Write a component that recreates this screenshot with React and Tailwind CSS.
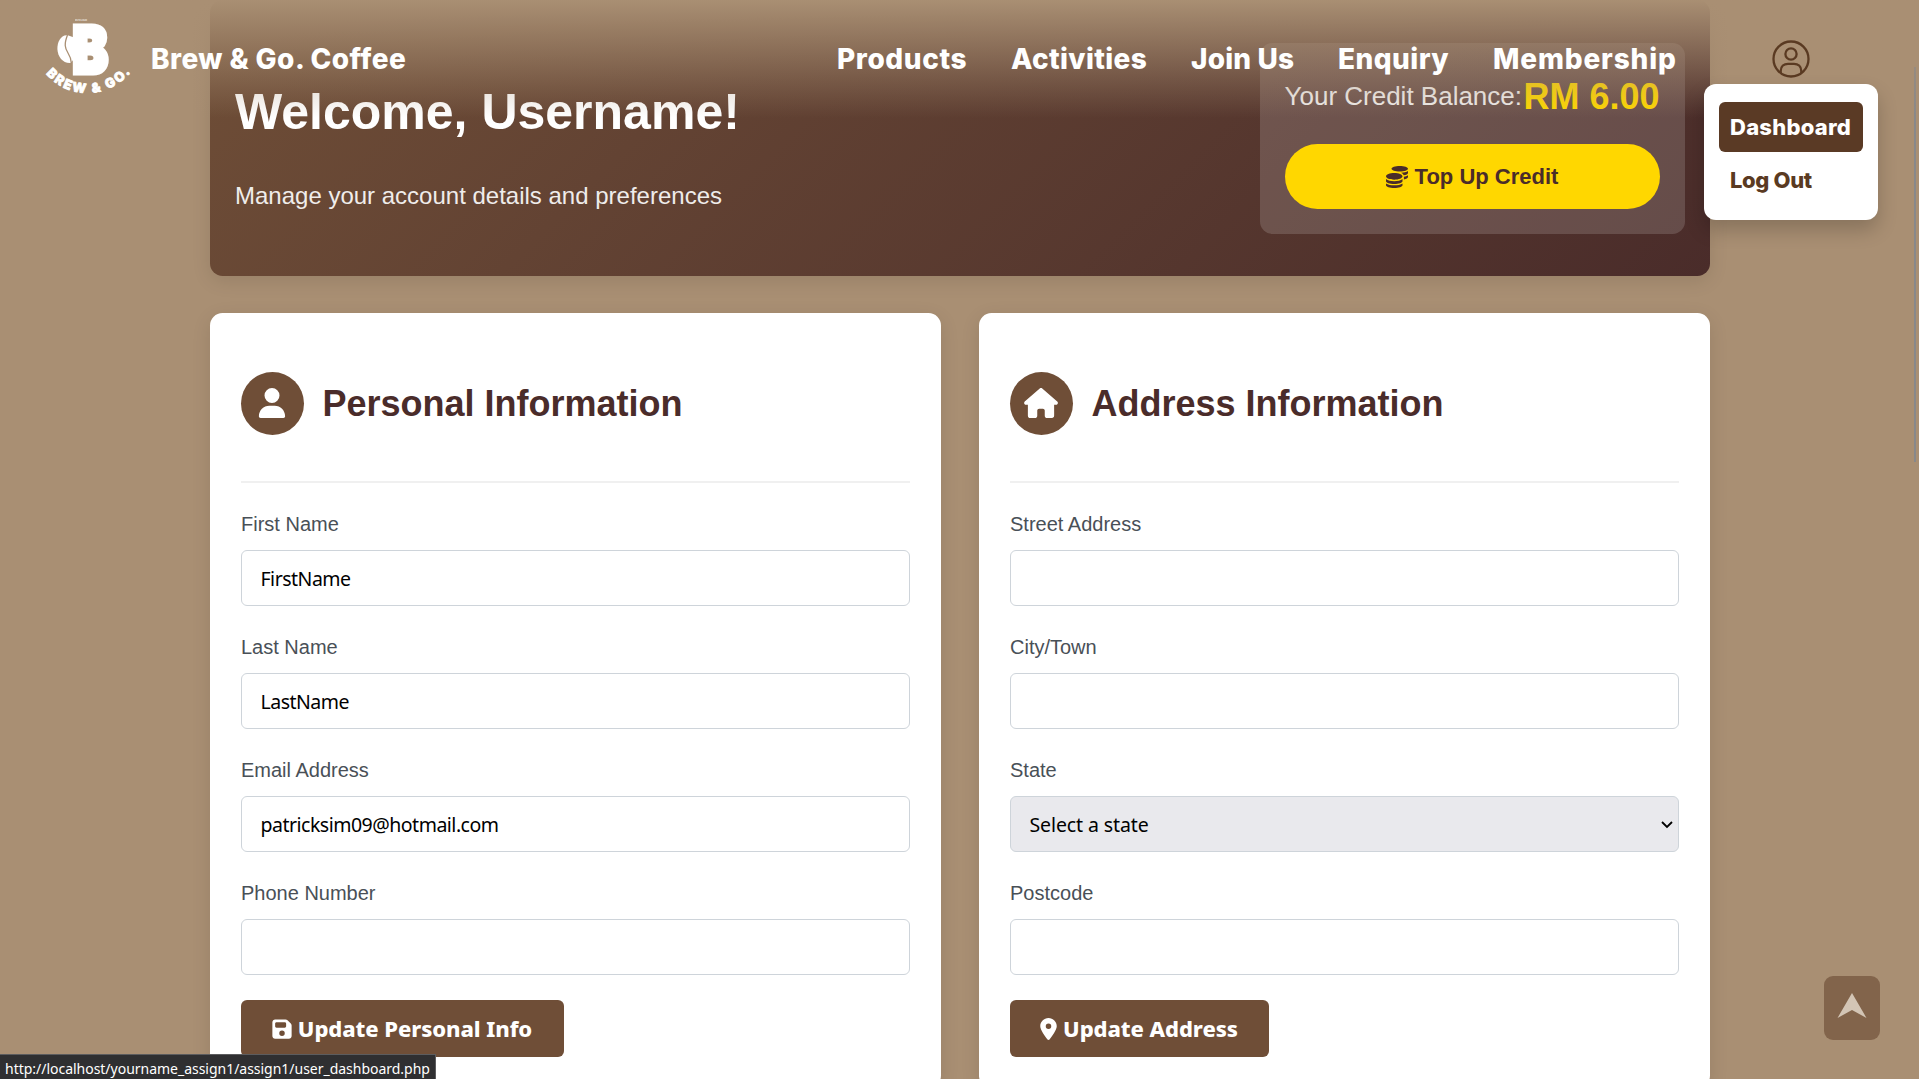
import { FaUser, FaHouse, FaFloppyDisk, FaLocationDot } from "react-icons/fa6";
import { FaCoins } from "react-icons/fa";

function Logo() {
  return (
    <svg width="90" height="80" viewBox="0 0 90 80" className="shrink-0 overflow-visible" fill="#fff">
      <text x="30" y="1.500" fontSize="2.400" fontWeight="700" opacity=".8" textLength="12" lengthAdjust="spacingAndGlyphs" fontFamily="Inter">ESTD 2020</text>
      <text x="0" y="0" transform="translate(27.6 53.9) scale(1.06 1.29)" fontSize="50" fontWeight="900" stroke="#fff" strokeWidth="4" fontFamily="Inter">B</text>
      <path d="M23.500 16.500C16 15 12.200 23 12.400 30C12.700 38 18 44.500 25.500 44L29 40V18.500Z" />
      <path d="M22.500 16C19 25 19.800 29 23 34C25.500 38 26.300 40 26.300 44" fill="none" stroke="#a98f73" strokeWidth="1.300" />
      <path id="logo-arc" d="M1 54.500C20 78.500 62 84.500 89.500 49" fill="none" />
      <text fontSize="13" fontWeight="800" stroke="#fff" strokeWidth=".9" strokeLinejoin="round" fontFamily="Inter" letterSpacing="2.100">
        <textPath href="#logo-arc">BREW &amp; GO.</textPath>
      </text>
    </svg>
  );
}

function ProfileIcon() {
  return (
    <svg width="38" height="38" viewBox="0 0 38 38" fill="none" stroke="#5a3a22" strokeWidth="2.300" className="block">
      <circle cx="19" cy="19" r="17.500" />
      <circle cx="19" cy="14" r="5.600" />
      <path d="M8.700 33V31C8.700 26.500 12 23.800 16 23.800H22C26 23.800 29.300 26.500 29.300 31V33" />
    </svg>
  );
}

function Header() {
  return (
    <header className="absolute inset-x-0 top-0 z-10 flex h-[118px] items-center bg-linear-to-b from-[#a98f73] to-[#a98f73]/0 pl-[45px] font-[Inter,sans-serif] text-[28px] leading-none font-extrabold text-white">
      <Logo />
      <span className="ml-[16px] w-[256px] tracking-[0.43px] whitespace-nowrap">Brew &amp; Go. Coffee</span>
      <nav className="ml-[430px] flex whitespace-nowrap">
        <a className="w-[174px] tracking-[0.6px]">Products</a>
        <a className="w-[180px] tracking-[0.35px]">Activities</a>
        <a className="w-[147px] tracking-[0.15px]">Join Us</a>
        <a className="w-[155px] tracking-[0.45px]">Enquiry</a>
        <a className="w-[184px] tracking-[0.85px]">Membership</a>
      </nav>
      <div className="relative ml-[95px]">
        <ProfileIcon />
        <div className="absolute top-[44px] left-[-68px] h-[136px] w-[174px] rounded-[12px] bg-white px-[15px] py-[18px] text-[22px] text-[#5a3a22] shadow-[0_10px_20px_rgba(0,0,0,0.2)]">
          <a className="flex h-[50px] items-center rounded-[6px] bg-[#5a3a25] px-[11px] tracking-[0.25px] text-white">Dashboard</a>
          <a className="mt-[3px] flex h-[50px] items-center px-[11px] tracking-[-0.35px]">Log Out</a>
        </div>
      </div>
    </header>
  );
}

function Banner() {
  return (
    <section className="flex h-[276px] shrink-0 justify-between rounded-[12.5px] bg-linear-135 from-[#6f4e37] to-[#4a2c2a] pr-[25px] pl-[25.5px] text-white shadow-[0_5px_19px_rgba(0,0,0,0.1)]">
      <div className="pt-[83px]">
        <h1 className="text-[50px] leading-[58px] font-bold">Welcome, Username!</h1>
        <p className="mt-[41px] text-[24px] leading-[28px] opacity-90">Manage your account details and preferences</p>
      </div>
      <div className="mt-[43px] h-[191px] w-[425px] rounded-[12.5px] bg-[#fff]/15 px-[25px] pt-[32px]">
        <div className="flex h-[43px] items-center justify-between whitespace-nowrap">
          <span className="text-[26px] opacity-90">Your Credit Balance:</span>
          <span className="text-[36px] font-bold text-[#ffd700]">RM 6.00</span>
        </div>
        <button className="mt-[26px] flex h-[65px] w-full items-center justify-center gap-[7px] rounded-full bg-[#ffd700] text-[22px] font-bold text-[#4a2c2a]">
          <FaCoins className="size-[22px]" />
          Top Up Credit
        </button>
      </div>
    </section>
  );
}

const control = "block h-[56px] w-full rounded-[6px] border border-[#ced4da] px-[19px] font-['Noto_Sans',sans-serif] text-[19.5px] text-black";

function Field({ label, value, select }) {
  return (
    <label className="mb-[22px] block">
      <span className="block h-[45px] pt-[7px] pl-[0.5px] text-[20px] leading-[24px] text-[#495057]">{label}</span>
      {select ? (
        <span className="relative block">
          <span className={control + " flex! items-center bg-[#e9e9ed] pt-px tracking-[-0.1px]"}>{value}</span>
          <svg width="12" height="8" viewBox="0 0 12 8" className="absolute top-[25px] right-[6px]" fill="none" stroke="#000" strokeWidth="1.800">
            <path d="M1 1L6 6L11 1" />
          </svg>
        </span>
      ) : (
        <input className={control + " bg-white tracking-[-0.5px]"} defaultValue={value} />
      )}
    </label>
  );
}

function Card({ icon, title, fields, button }) {
  return (
    <section className="h-[775px] flex-1 rounded-[12.5px] bg-white px-[31px] shadow-[0_5px_19px_rgba(0,0,0,0.1)]">
      <div className="mb-[22px] flex h-[170px] items-center gap-[19px] border-b-2 border-[#f0f0f0] pt-[12px]">
        <span className="flex size-[63px] items-center justify-center rounded-full bg-[#6f4e37] text-[30px] text-white">{icon}</span>
        <h2 className="pt-[2px] text-[36px] font-bold text-[#4a2c2a]">{title}</h2>
      </div>
      {fields.map((f) => (
        <Field key={f.label} {...f} />
      ))}
      {button}
    </section>
  );
}

const buttonClass = "mt-[25px] flex h-[57px] items-center justify-center rounded-[6px] bg-[#6f4e37] font-['Noto_Sans',sans-serif] text-[22px] font-extrabold tracking-[-0.08px] whitespace-nowrap text-white";

export default function App() {
  return (
    <div className="relative h-[1079px] w-full overflow-hidden bg-[#a98f73] font-['Liberation_Sans',Arial,sans-serif]">
      <Header />
      <main className="mx-auto flex w-[1500px] flex-col gap-[37px]">
        <Banner />
        <div className="flex gap-[38px]">
          <Card
            icon={<FaUser />}
            title="Personal Information"
            fields={[
              { label: "First Name", value: "FirstName" },
              { label: "Last Name", value: "LastName" },
              { label: "Email Address", value: "patricksim09@hotmail.com" },
              { label: "Phone Number", value: "" },
            ]}
            button={
              <button className={buttonClass + " w-[323px] gap-[6px]"}>
                <FaFloppyDisk className="h-[22px] w-[20px]" />
                Update Personal Info
              </button>
            }
          />
          <Card
            icon={<FaHouse className="h-[30px] w-[34px]" />}
            title="Address Information"
            fields={[
              { label: "Street Address", value: "" },
              { label: "City/Town", value: "" },
              { label: "State", value: "Select a state", select: true },
              { label: "Postcode", value: "" },
            ]}
            button={
              <button className={buttonClass + " w-[259px] gap-[6px]"}>
                <FaLocationDot className="h-[22px] w-[17px]" />
                Update Address
              </button>
            }
          />
        </div>
      </main>
      <button className="absolute top-[976px] left-[1824px] flex h-[64px] w-[56px] justify-center rounded-[9px] bg-[#82644b] pt-[17px]">
        <svg width="30" height="26" viewBox="0 0 30 26" fill="#d3c5b5">
          <path d="M15 0L29.500 25L15 17L0.500 25Z" />
        </svg>
      </button>
      <div className="absolute top-[67px] right-[3px] h-[395px] w-[2px] bg-[#88888a]" />
      <div className="absolute bottom-0 left-0 flex h-[25px] w-[436px] items-center border-t border-r border-[#5c5c5e] bg-[#2f2f31] pt-[2px] pl-[5px] font-['Noto_Sans',sans-serif] text-[14px] tracking-[-0.02px] whitespace-nowrap text-white">
        http://localhost/yourname_assign1/assign1/user_dashboard.php
      </div>
    </div>
  );
}
